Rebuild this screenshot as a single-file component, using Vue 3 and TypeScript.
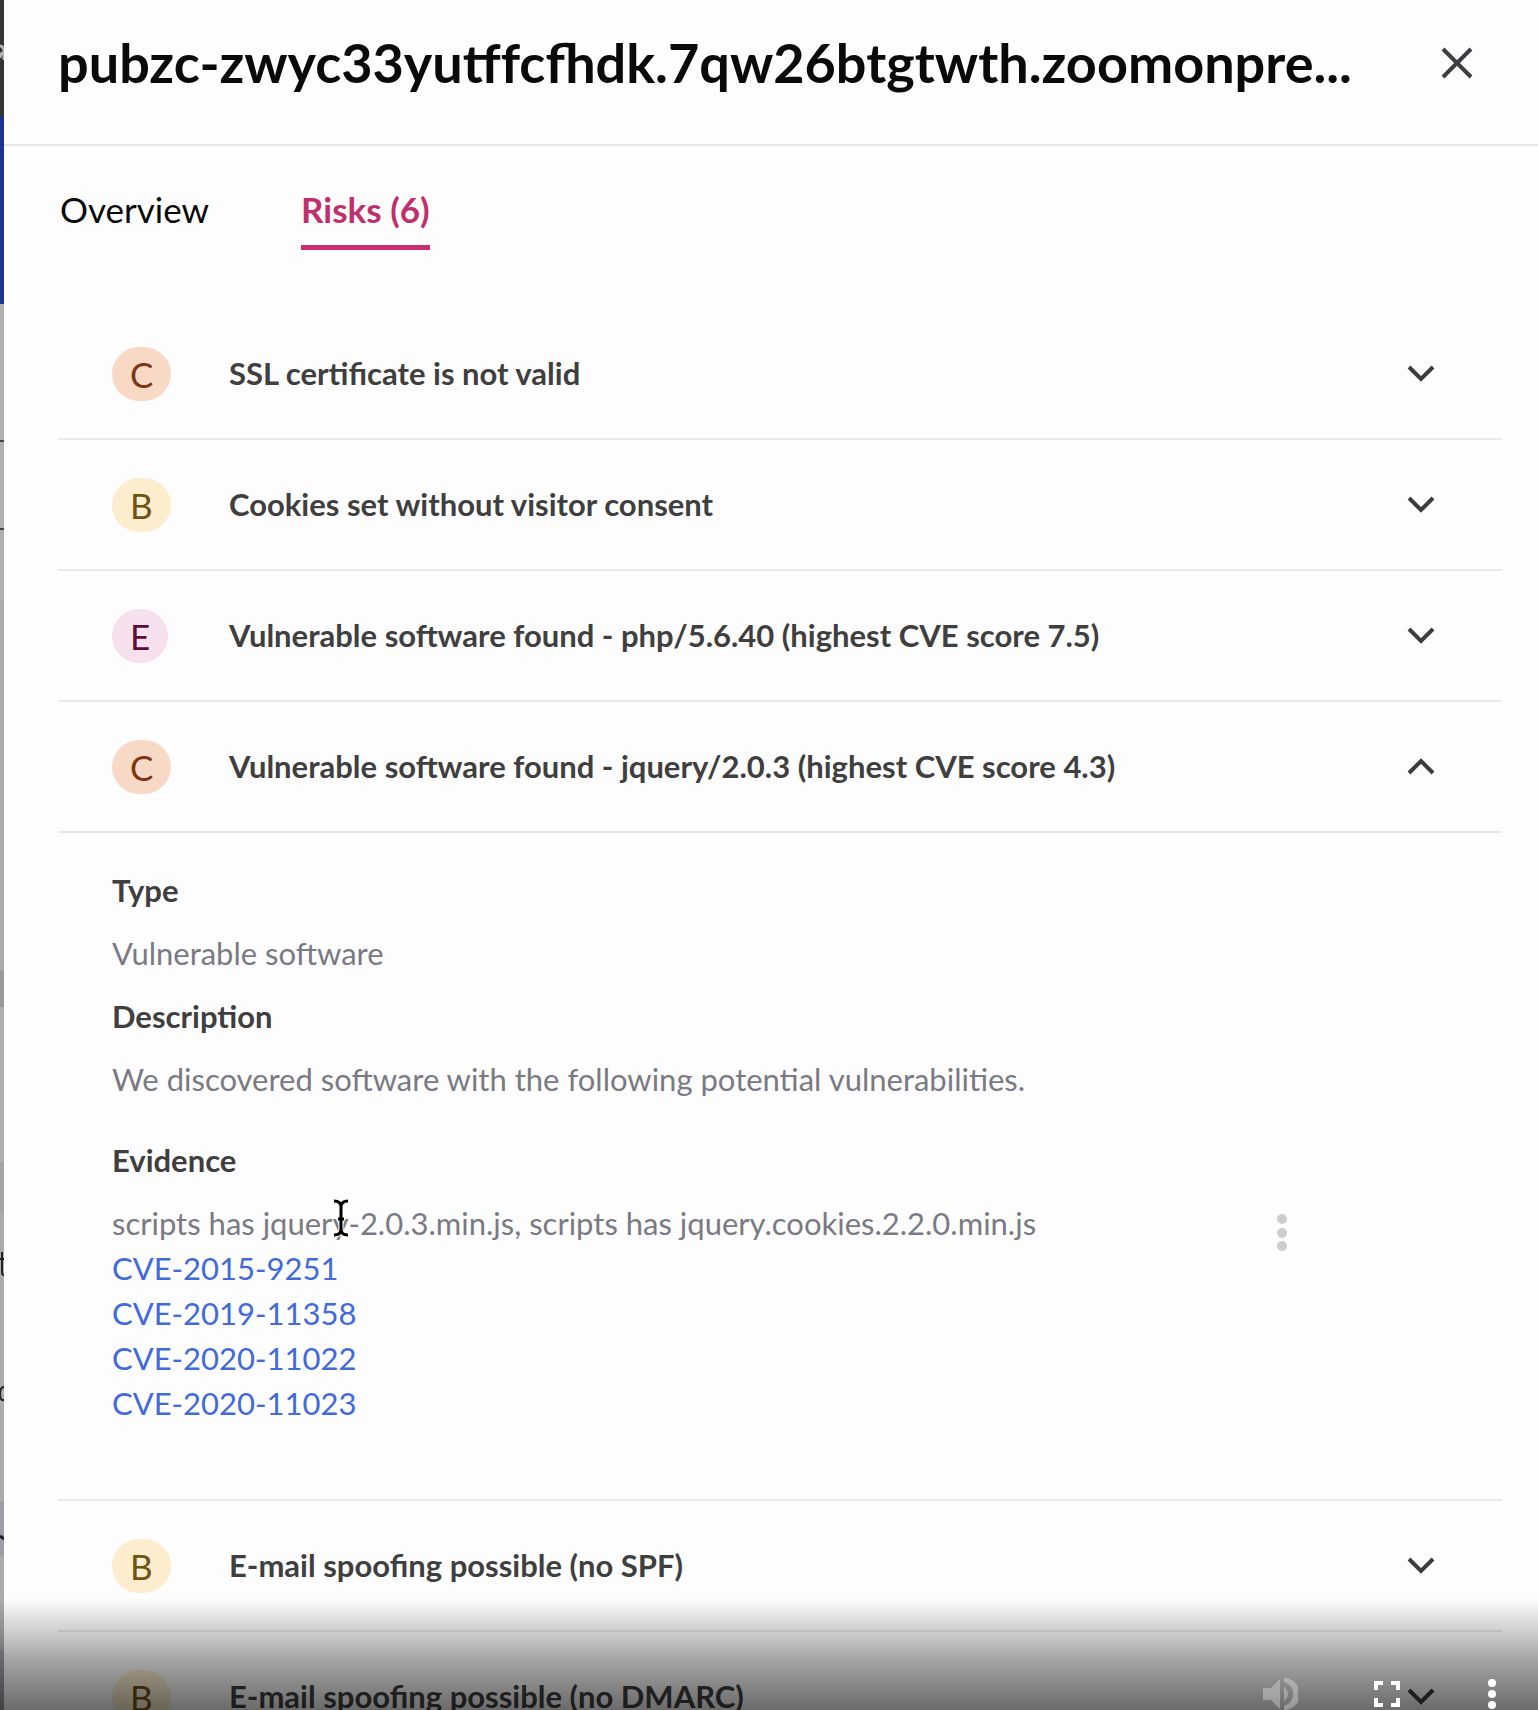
<script setup lang="ts">
import { ref } from 'vue'

interface Risk {
  grade: 'B' | 'C' | 'E'
  title: string
}

const risks: Risk[] = [
  { grade: 'C', title: 'SSL certificate is not valid' },
  { grade: 'B', title: 'Cookies set without visitor consent' },
  { grade: 'E', title: 'Vulnerable software found - php/5.6.40 (highest CVE score 7.5)' },
  { grade: 'C', title: 'Vulnerable software found - jquery/2.0.3 (highest CVE score 4.3)' },
  { grade: 'B', title: 'E-mail spoofing possible (no SPF)' },
  { grade: 'B', title: 'E-mail spoofing possible (no DMARC)' },
]

const cves: string[] = ['CVE-2015-9251', 'CVE-2019-11358', 'CVE-2020-11022', 'CVE-2020-11023']

const openIndex = ref<number>(3)
</script>

<template>
  <div class="screen">
    <!-- Sliver of the page behind the drawer -->
    <svg class="behind" width="4" height="1710" viewBox="0 0 4 1710" aria-hidden="true">
      <rect width="4" height="117" fill="#333335" />
      <path d="M0 46Q4 46 4 52V60M4 53Q0 53 0 58" fill="none" stroke="#b5b5b5" stroke-width="3" />
      <rect y="117" width="4" height="187" fill="#1c3391" />
      <rect y="304" width="4" height="296" fill="#b0b0b0" />
      <rect y="440" width="4" height="2" fill="#444" />
      <rect y="528" width="4" height="2" fill="#444" />
      <rect y="600" width="4" height="371" fill="#a9a9a9" />
      <rect y="971" width="4" height="36" fill="#999" />
      <rect y="1007" width="4" height="155" fill="#afafaf" />
      <rect y="1162" width="4" height="50" fill="#a4a4a4" />
      <path d="M2 1252V1272Q2 1275 4 1275M0 1259H4" fill="none" stroke="#222" stroke-width="2" />
      <path d="M4 1387Q0 1387 0 1394T4 1400" fill="none" stroke="#222" stroke-width="2" />
      <rect y="1502" width="4" height="54" fill="#9d9da5" />
      <path d="M0 1536L4 1539M0 1685L4 1688" stroke="#1c1c28" stroke-width="3" />
      <rect y="1650" width="4" height="60" fill="#9d9da5" />
    </svg>

    <main class="drawer">
      <header class="head">
        <h1 class="title">pubzc-zwyc33yutffcfhdk.7qw26btgtwth.zoomonpre...</h1>
        <button class="close" type="button" aria-label="Close">
          <svg width="32" height="32" viewBox="0 0 32 32">
            <path d="M2 2L30 30M30 2L2 30" fill="none" stroke="#3d3d42" stroke-width="4" />
          </svg>
        </button>
      </header>

      <nav class="tabs" role="tablist">
        <button class="tab" type="button" role="tab" aria-selected="false">Overview</button>
        <button class="tab active" type="button" role="tab" aria-selected="true">Risks (6)</button>
      </nav>

      <div class="list">
        <section v-for="(risk, i) in risks" :key="risk.title">
          <button
            class="row"
            type="button"
            :aria-expanded="openIndex === i"
            @click="openIndex = openIndex === i ? -1 : i"
          >
            <span class="grade-cell">
              <span class="grade" :class="'grade-' + risk.grade.toLowerCase()">{{ risk.grade }}</span>
            </span>
            <span class="row-title">{{ risk.title }}</span>
            <svg class="chevron" width="28" height="18" viewBox="0 0 28 18" aria-hidden="true">
              <path
                :d="openIndex === i ? 'M2 15L14 3L26 15' : 'M2 2L14 14L26 2'"
                fill="none"
                stroke="#3c3c3c"
                stroke-width="4"
              />
            </svg>
          </button>

          <div v-if="openIndex === i" class="details">
            <h2>Type</h2>
            <p>Vulnerable software</p>
            <h2>Description</h2>
            <p>We discovered software with the following potential vulnerabilities.</p>
            <div class="evidence">
              <div>
                <h2>Evidence</h2>
                <div class="script-line">
                  scripts has jquery-2.0.3.min.js, scripts has jquery.cookies.2.2.0.min.js
                  <svg class="cursor" width="18" height="38" viewBox="0 0 18 38" aria-hidden="true">
                    <path
                      d="M2 2Q9 2 9 8Q9 2 16 2M9 7V31M2 36Q9 36 9 30Q9 36 16 36M6 20H12"
                      fill="none"
                      stroke="#fff"
                      stroke-width="5"
                    />
                    <path
                      d="M2 2Q9 2 9 8Q9 2 16 2M9 7V31M2 36Q9 36 9 30Q9 36 16 36M6 20H12"
                      fill="none"
                      stroke="#000"
                      stroke-width="3"
                    />
                  </svg>
                </div>
                <ul>
                  <li v-for="cve in cves" :key="cve"><a href="#">{{ cve }}</a></li>
                </ul>
              </div>
              <button class="more" type="button" aria-label="More actions">
                <svg width="10" height="38" viewBox="0 0 10 38" fill="#cdcdcd">
                  <circle cx="5" cy="5" r="5" />
                  <circle cx="5" cy="19" r="5" />
                  <circle cx="5" cy="32" r="5" />
                </svg>
              </button>
            </div>
          </div>
        </section>
      </div>
    </main>

    <!-- Media controls over the bottom edge -->
    <div class="player">
      <button type="button" aria-label="Mute">
        <svg width="36" height="36" viewBox="0 0 36 36" fill="#fff" opacity="0.3">
          <path d="M1 14H9L18 5V35L9 26H1Z" />
          <path d="M22 13Q26 16 26 20T22 27Z" />
          <path d="M22 4A16 16 0 0 1 22 36V32A12.400 12.400 0 0 0 22 8Z" />
        </svg>
      </button>
      <button class="fullscreen" type="button" aria-label="Full screen">
        <svg width="26" height="26" viewBox="0 0 26 26" fill="none" stroke="#fff" stroke-width="4">
          <path d="M2 9V2H9M17 2H24V9M24 17V24H17M9 24H2V17" />
        </svg>
      </button>
      <button type="button" aria-label="More options">
        <svg width="8" height="31" viewBox="0 0 8 31" fill="#fff">
          <circle cx="4" cy="4" r="4" />
          <circle cx="4" cy="15" r="4" />
          <circle cx="4" cy="26" r="4" />
        </svg>
      </button>
    </div>
  </div>
</template>

<style>
body {
  margin: 0;
}
</style>

<style scoped>
.screen {
  position: relative;
  display: flex;
  height: 100vh;
  overflow: hidden;
  font-family: Lato, 'Liberation Sans', sans-serif;
  color: #3f3f3f;
  background: #acacac;
}

button {
  padding: 0;
  border: 0;
  background: none;
  font: inherit;
  color: inherit;
  cursor: pointer;
}

svg {
  display: block;
}

.behind {
  flex: none;
}

.drawer {
  flex: 1;
  min-width: 0;
  background: #fdfdfd;
}

.head {
  display: flex;
  align-items: center;
  justify-content: space-between;
  padding: 0 65px 18px 54px;
  border-bottom: 2px solid #e5e5ec;
  height: 126px;
}

.title {
  margin: 0;
  font-size: 54px;
  line-height: 64px;
  font-weight: 700;
  white-space: nowrap;
  color: #0a0a0a;
}

.tabs {
  display: flex;
  gap: 92px;
  padding: 39px 54px 0 56px;
}

.tab {
  height: 65px;
  padding-bottom: 12px;
  border-bottom: 5px solid transparent;
  font-size: 35px;
  line-height: 48px;
  color: #0a0a0a;
}

.tab.active {
  border-color: #cb2e70;
  font-weight: 700;
  color: #c02f6d;
}

.list {
  padding: 59px 36px 0 54px;
}

.row {
  display: flex;
  align-items: center;
  width: 100%;
  height: 131px;
  padding: 0 67px 0 54px;
  border-bottom: 2px solid #e9e9e9;
  text-align: left;
}

.grade-cell {
  width: 117px;
}

.grade {
  display: inline-block;
  padding: 0 18px;
  border-radius: 27px;
  font-size: 35px;
  line-height: 54px;
}

.grade-b {
  color: #6e5213;
  background: #fcedcf;
}

.grade-c {
  color: #7b3512;
  background: #f8d9c6;
}

.grade-e {
  color: #5b0b35;
  background: #f7e0ed;
}

.row-title {
  flex: 1;
  font-size: 31px;
  line-height: 45px;
  font-weight: 700;
}

.details {
  padding: 35px 0 73px 54px;
  border-bottom: 2px solid #e9e9e9;
  font-size: 31px;
  line-height: 45px;
  color: #7a7a83;
}

.details h2 {
  margin: 0 0 18px;
  font-size: 31px;
  line-height: 45px;
  font-weight: 700;
  color: #3f3f3f;
}

.details p {
  margin: 0 0 18px;
}

.evidence {
  display: flex;
  justify-content: space-between;
  align-items: flex-start;
  padding: 18px 215px 0 0;
}

.script-line {
  position: relative;
}

.cursor {
  position: absolute;
  left: 220px;
  top: -2px;
}

ul {
  margin: 0;
  padding: 0;
  list-style: none;
}

a {
  color: #426ad8;
  text-decoration: none;
}

.more {
  padding-top: 76px;
}

.player {
  position: absolute;
  left: 0;
  right: 0;
  bottom: 0;
  display: flex;
  justify-content: flex-end;
  align-items: flex-end;
  box-sizing: border-box;
  height: 112px;
  padding: 0 42px 0 0;
  background: linear-gradient(
    to bottom,
    rgba(0, 0, 0, 0),
    rgba(0, 0, 0, 0.18) 29%,
    rgba(0, 0, 0, 0.35) 55%,
    rgba(0, 0, 0, 0.58)
  );
}

.player .fullscreen {
  margin: 0 88px 3px 76px;
}
</style>
